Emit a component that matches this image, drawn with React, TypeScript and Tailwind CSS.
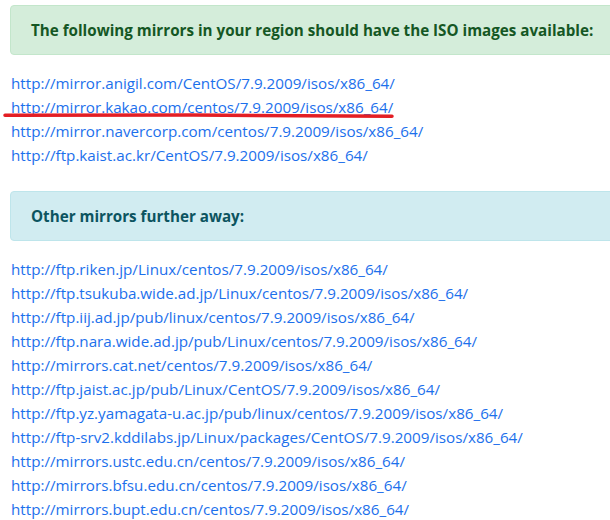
import React from "react";

const near = [
  "http://mirror.anigil.com/CentOS/7.9.2009/isos/x86_64/",
  "http://mirror.kakao.com/centos/7.9.2009/isos/x86_64/",
  "http://mirror.navercorp.com/centos/7.9.2009/isos/x86_64/",
  "http://ftp.kaist.ac.kr/CentOS/7.9.2009/isos/x86_64/",
];

const far = [
  "http://ftp.riken.jp/Linux/centos/7.9.2009/isos/x86_64/",
  "http://ftp.tsukuba.wide.ad.jp/Linux/centos/7.9.2009/isos/x86_64/",
  "http://ftp.iij.ad.jp/pub/linux/centos/7.9.2009/isos/x86_64/",
  "http://ftp.nara.wide.ad.jp/pub/Linux/centos/7.9.2009/isos/x86_64/",
  "http://mirrors.cat.net/centos/7.9.2009/isos/x86_64/",
  "http://ftp.jaist.ac.jp/pub/Linux/CentOS/7.9.2009/isos/x86_64/",
  "http://ftp.yz.yamagata-u.ac.jp/pub/linux/centos/7.9.2009/isos/x86_64/",
  "http://ftp-srv2.kddilabs.jp/Linux/packages/CentOS/7.9.2009/isos/x86_64/",
  "http://mirrors.ustc.edu.cn/centos/7.9.2009/isos/x86_64/",
  "http://mirrors.bfsu.edu.cn/centos/7.9.2009/isos/x86_64/",
  "http://mirrors.bupt.edu.cn/centos/7.9.2009/isos/x86_64/",
];

function LinkList({ items }: { items: string[] }) {
  return (
    <div className="flex flex-col pl-[11px]">
      {items.map((u) => (
        <a
          key={u}
          href="#"
          className="block text-[15.2px] leading-[24px] text-[#1c70ec] whitespace-nowrap"
        >
          {u}
        </a>
      ))}
    </div>
  );
}

export default function App() {
  return (
    <div
      className="relative w-[610px] h-[520px] overflow-hidden bg-white"
      style={{ fontFamily: '"Open Sans", "Noto Sans", sans-serif' }}
    >
      <div className="pt-[5px] pl-[10px]">
        <div className="w-[640px] rounded border border-[#c3e6cb] bg-[#d4edda] px-[20px] py-[12px] text-[15.2px] leading-[24px] font-bold text-[#155724] whitespace-nowrap">
          The following mirrors in your region should have the ISO images available:
        </div>
      </div>
      <div className="pt-[16px]">
        <LinkList items={near} />
      </div>
      <div className="pt-[24px] pl-[10px]">
        <div className="w-[640px] rounded border border-[#bee5eb] bg-[#d1ecf1] px-[20px] py-[12px] text-[15.2px] leading-[24px] font-bold text-[#0c5460] whitespace-nowrap">
          Other mirrors further away:
        </div>
      </div>
      <div className="pt-[16px]">
        <LinkList items={far} />
      </div>
      <svg
        className="absolute left-0 top-0 pointer-events-none"
        width="610"
        height="520"
      >
        <path
          d="M5 115.2 C 120 114.8, 280 115, 392 116.2"
          stroke="#e31e24"
          strokeWidth="3.5"
          strokeLinecap="round"
          fill="none"
        />
      </svg>
    </div>
  );
}
